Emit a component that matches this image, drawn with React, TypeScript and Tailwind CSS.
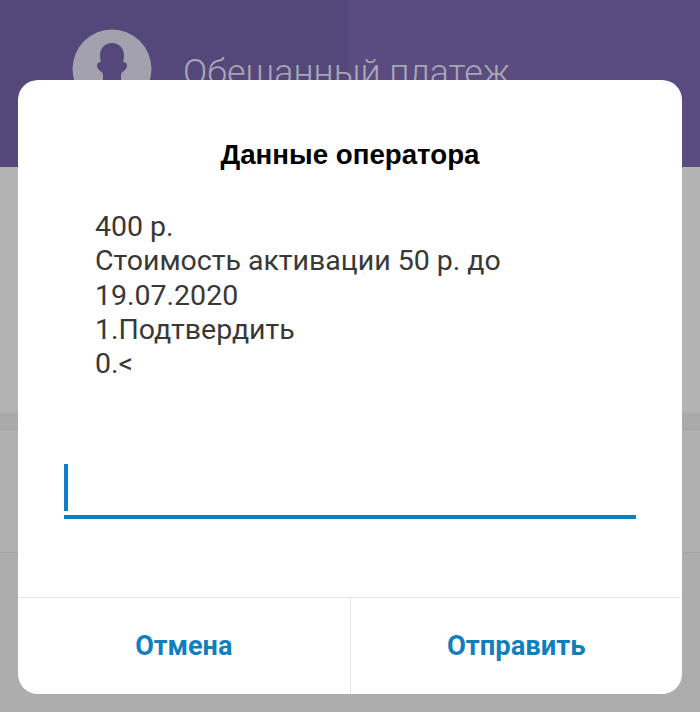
import React from 'react';

const UserIcon = () => (
  <svg viewBox="0 0 80 80" className="h-20 w-20">
    <circle cx="40" cy="40" r="39.5" fill="#a3a1ad" />
    <path
      d="M40 14c-7 0-12 5-12 12 0 2 0 5 1 7-2 0-4 1-4 3 0 3 2 6 5 7l1 3v35h18V46l1-3c3-1 5-4 5-7 0-2-2-3-4-3 1-2 1-5 1-7 0-7-5-12-12-12z"
      fill="#54487a"
    />
  </svg>
);

const App: React.FC = () => {
  return (
    <div className="relative h-[712px] w-[700px] overflow-hidden bg-[#adadad] font-['Roboto',sans-serif]">
      {/* page behind the dialog */}
      <div className="flex h-[167px]">
        <div className="flex w-[348px] shrink-0 bg-[#54487a] pl-[72px] pt-[29px]">
          <UserIcon />
        </div>
        <div className="flex-1 bg-[#5a4b80]" />
      </div>
      <div className="h-[247px] border-b border-[#a6a6a6] bg-[#b3b3b3]" />
      <div className="h-[16px] border-b border-[#a3a3a3] bg-[#aaaaaa]" />
      <div className="h-[123px] border-b border-[#a3a3a3] bg-[#b0b0b0]" />

      <div className="absolute left-[183px] top-[50px] text-[35.8px] font-light leading-[44px] text-[#a9a6b5]">
        Обещанный платеж
      </div>

      {/* dialog */}
      <div className="absolute left-[18px] top-[80px] flex h-[614px] w-[664px] flex-col rounded-[20px] bg-white">
        <h2 className="mt-[57px] text-center font-['Liberation_Sans',sans-serif] text-[27.7px] font-bold leading-[36px] text-black">
          Данные оператора
        </h2>
        <p className="mt-[37px] pl-[77px] pr-[140px] text-[28.5px] leading-[34.3px] text-[#383838]">
          400 р.
          <br />
          Стоимость активации 50 р. до
          <br />
          19.07.2020
          <br />
          1.Подтвердить
          <br />
          0.&lt;
        </p>
        <div className="mx-[46px] mt-[82.5px] border-b-4 border-[#0f7fbf] pb-[4px]">
          <div className="h-[47px] w-1 bg-[#0f7fbf]" />
        </div>
        <div className="mt-auto flex h-[97px] border-t border-[#e4e4e4]">
          <button className="flex-1 border-r border-[#e4e4e4] pt-[1px] text-[27px] font-bold text-[#0f7fbf]">Отмена</button>
          <button className="flex-1 pt-[1px] text-[27.4px] font-bold text-[#0f7fbf]">Отправить</button>
        </div>
      </div>
    </div>
  );
};

export default App;
